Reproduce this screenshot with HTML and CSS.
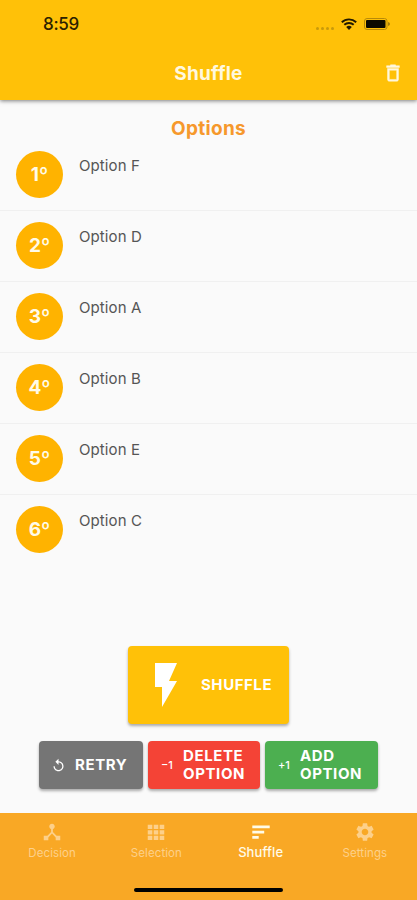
FILE: index.html
```html
<!DOCTYPE html>
<html lang="en">
<head>
<meta charset="utf-8">
<title>Shuffle</title>
<link rel="stylesheet" href="styles.css">
</head>
<body>
<div class="app">
  <header class="header">
    <div class="status">
      <span class="time">8:59</span>
      <div class="indicators">
        <span class="dots"><i></i><i></i><i></i><i></i></span>
        <svg class="wifi" viewBox="0 0 16 12"><path d="M.8 4.2a10.5 10.5 0 0 1 14.4 0M3.3 6.8a6.9 6.9 0 0 1 9.4 0" fill="none" stroke="#211900" stroke-width="1.9"/><path d="M5.2 8.9a4.2 4.2 0 0 1 5.6 0L8 12z" fill="#211900"/></svg>
        <svg class="battery" viewBox="0 0 26 12"><rect x=".5" y=".5" width="22.500" height="11" rx="2.500" fill="none" stroke="#b88a08"/><rect x="2" y="2" width="19.500" height="8" rx="1" fill="#0d0a00"/><path d="M24 4q2 .5 2 2t-2 2z" fill="#a87e08"/></svg>
      </div>
    </div>
    <div class="toolbar">
      <h1>Shuffle</h1>
      <svg class="trash" viewBox="0 0 24 24"><path fill="#fff8df" stroke="#fff8df" stroke-width=".5" d="M6 19c0 1.100.9 2 2 2h8c1.100 0 2-.9 2-2V7H6v12zM8 9h8v10H8V9zm7.500-5l-1-1h-5l-1 1H5v2h14V4z"/></svg>
    </div>
  </header>
  <main class="main">
    <h2>Options</h2>
    <ol class="list">
      <li><span class="rank">1º</span><span class="name">Option F</span></li>
      <li><span class="rank">2º</span><span class="name">Option D</span></li>
      <li><span class="rank">3º</span><span class="name">Option A</span></li>
      <li><span class="rank">4º</span><span class="name">Option B</span></li>
      <li><span class="rank">5º</span><span class="name">Option E</span></li>
      <li><span class="rank">6º</span><span class="name">Option C</span></li>
    </ol>
    <button class="btn shuffle"><svg viewBox="0 0 22 44"><path fill="#fff" d="M0 0h22l-8 18h8L7 44V24H0z"/></svg><span>SHUFFLE</span></button>
    <div class="actions">
      <button class="btn retry"><svg viewBox="0 0 24 24"><path fill="#fff" d="M12 5V1L7 6l5 5V7c3.310 0 6 2.690 6 6s-2.690 6-6 6-6-2.690-6-6H4c0 4.420 3.580 8 8 8s8-3.580 8-8-3.580-8-8-8z"/></svg><span>RETRY</span></button>
      <button class="btn delete"><small>−1</small><span>DELETE<br>OPTION</span></button>
      <button class="btn add"><small>+1</small><span>ADD<br>OPTION</span></button>
    </div>
  </main>
  <nav class="nav">
    <div class="tabs">
      <a class="tab"><svg viewBox="0 0 24 24"><path d="M17 16l-4-4V8.820C14.160 8.400 15 7.300 15 6c0-1.660-1.340-3-3-3S9 4.340 9 6c0 1.300.84 2.400 2 2.820V12l-4 4H3v5h5v-3.050l4-4.200 4 4.200V21h5v-5h-4z"/></svg><span>Decision</span></a>
      <a class="tab"><svg viewBox="0 0 24 24"><path d="M3 4h5v4.600H3zM9.500 4h5v4.600h-5zM16 4h5v4.600h-5zM3 10h5v4.600H3zM9.500 10h5v4.600h-5zM16 10h5v4.600h-5zM3 16h5v4.600H3zM9.500 16h5v4.600h-5zM16 16h5v4.600h-5z"/></svg><span>Selection</span></a>
      <a class="tab active"><svg viewBox="0 0 24 24"><path d="M2.500 5h19v3h-19zM2.500 10.700h13v3h-13zM2.500 16.300h7v3h-7z"/></svg><span>Shuffle</span></a>
      <a class="tab"><svg viewBox="0 0 24 24"><path d="M19.140 12.940c.04-.3.060-.61.060-.94s-.02-.64-.07-.94l2.030-1.580c.18-.14.230-.41.120-.61l-1.920-3.320c-.12-.22-.37-.29-.59-.22l-2.390.96c-.5-.38-1.030-.7-1.620-.94l-.36-2.540c-.04-.24-.24-.41-.48-.41h-3.840c-.24 0-.43.170-.47.410l-.36 2.540c-.59.240-1.130.57-1.620.94l-2.390-.96c-.22-.08-.47 0-.59.220L2.740 8.870c-.12.210-.08.470.12.610l2.030 1.580c-.05.3-.09.630-.09.940s.02.640.07.940l-2.030 1.580c-.18.140-.23.410-.12.610l1.920 3.320c.12.220.37.290.59.220l2.390-.96c.5.380 1.030.7 1.620.94l.36 2.540c.05.240.24.410.48.410h3.840c.24 0 .44-.17.470-.41l.36-2.540c.59-.24 1.130-.56 1.620-.94l2.390.96c.22.080.47 0 .59-.22l1.920-3.320c.12-.22.070-.47-.12-.61l-2.010-1.580zM12 15.600c-1.980 0-3.600-1.620-3.600-3.600s1.620-3.600 3.600-3.600 3.600 1.620 3.600 3.600-1.620 3.600-3.600 3.600z"/></svg><span>Settings</span></a>
    </div>
    <div class="home"></div>
  </nav>
</div>
</body>
</html>
```
FILE: styles.css
```css
* { box-sizing: border-box; }
body { margin: 0; font-family: Inter, "Liberation Sans", sans-serif; }
.app { width: 417px; height: 900px; display: flex; flex-direction: column; background: #fafafa; overflow: hidden; }
.header { height: 100px; flex: none; background: #ffc108; box-shadow: 0 1px 4px rgba(0,0,0,.5); }
.status { height: 48px; padding: 0 27px 0 43px; display: flex; justify-content: space-between; align-items: center; }
.time { font-size: 17px; font-weight: 500; letter-spacing: -.3px; color: #2b2100; }
.indicators { display: flex; align-items: center; }
.dots { display: flex; gap: 2px; margin: 9px 7px 0 0; }
.dots i { width: 3px; height: 3px; border-radius: 50%; background: #c99a0b; }
.wifi { width: 16px; height: 12px; margin-right: 7px; }
.battery { width: 26px; height: 12px; }
.toolbar { height: 52px; display: grid; grid-template-columns: 48px 1fr 48px; align-items: center; }
h1 { grid-column: 2; margin: 0; text-align: center; font-size: 19px; line-height: 24px; font-weight: 700; letter-spacing: .2px; color: #fff8df; }
.trash { width: 22px; height: 22px; justify-self: center; margin-top: -2px; }
.main { flex: 1; display: flex; flex-direction: column; align-items: center; }
h2 { margin: 17px 0 0; font-size: 19px; line-height: 23px; font-weight: 700; letter-spacing: .3px; color: #f6982c; }
.list { width: 100%; height: 426px; margin: 0; padding: 0; list-style: none; }
.list li { height: 71px; display: flex; padding: 11px 16px 0; border-bottom: 1px solid #f0f0f0; }
.list li:last-child { border: 0; }
.rank { width: 47px; height: 47px; border-radius: 50%; background: #ffb300; color: #fffbe9; font-size: 19px; line-height: 48px; font-weight: 700; text-align: center; }
.name { margin-left: 16px; padding-top: 5px; font-size: 15px; line-height: 19px; font-weight: 400; letter-spacing: .1px; color: #555; }
.btn { border: 0; border-radius: 4px; padding: 0; display: flex; align-items: center; font: 700 15px/18px Inter, sans-serif; color: #fff; text-align: left; box-shadow: 0 2px 3px rgba(0,0,0,.32); }
.shuffle { width: 161px; height: 78px; margin-top: 80px; padding-left: 27px; background: #ffc108; letter-spacing: .55px; }
.shuffle svg { width: 22px; height: 44px; margin-right: 24px; }
.actions { display: flex; gap: 5px; margin-top: 17px; }
.actions .btn { height: 48px; font-size: 15px; letter-spacing: .6px; }
.actions .retry { width: 104px; padding-left: 12px; background: #757575; }
.retry svg { width: 15px; height: 15px; margin-right: 9px; }
.delete { width: 112px; padding-left: 13px; background: #f44336; }
.add { width: 113px; padding-left: 13px; background: #4caf50; }
.btn small { width: 22px; font-size: 11px; font-weight: 500; letter-spacing: 0; }
.nav { height: 87px; flex: none; background: #f9a825; }
.tabs { display: flex; height: 75px; padding-top: 8px; }
.tab { flex: 1; display: flex; flex-direction: column; align-items: center; color: #fdd08a; font-size: 11.500px; line-height: 16px; letter-spacing: .1px; }
.tab svg { width: 22px; height: 22px; fill: currentColor; margin-bottom: 2px; }
.active { color: #fffbe8; font-size: 13px; font-weight: 500; }
.active span { margin-top: -1px; }
.home { width: 149px; height: 4px; margin: 0 auto; border-radius: 2px; background: #000; }
```
